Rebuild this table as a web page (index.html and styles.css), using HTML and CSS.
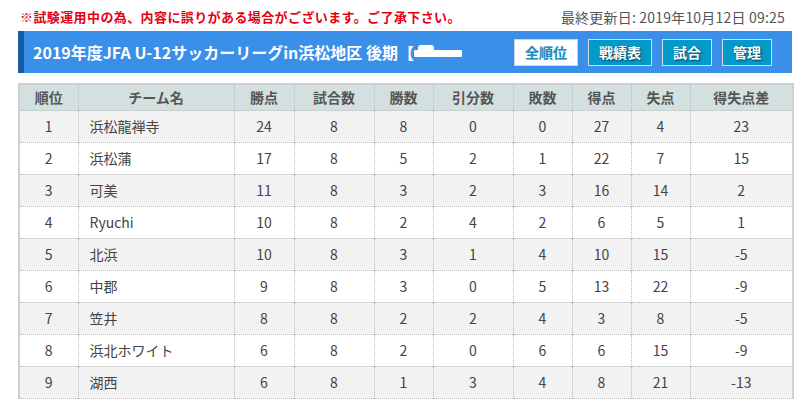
FILE: index.html
```html
<!DOCTYPE html>
<html lang="ja">
<head>
<meta charset="utf-8">
<title>順位表</title>
<link rel="stylesheet" href="styles.css">
</head>
<body>
<div class="page">
  <div class="topline">
    <p class="notice">※試験運用中の為、内容に誤りがある場合がございます。ご了承下さい。</p>
    <p class="updated">最終更新日: 2019年10月12日 09:25</p>
  </div>
  <div class="titlebar">
    <h1 class="title">2019年度JFA U-12サッカーリーグin浜松地区 後期【<span class="redact"><span class="redact-lump"></span></span></h1>
    <nav class="menu">
      <a class="btn btn-active">全順位</a>
      <a class="btn">戦績表</a>
      <a class="btn">試合</a>
      <a class="btn">管理</a>
    </nav>
  </div>
  <table class="standings">
    <colgroup>
      <col class="c-rank"><col class="c-team"><col class="c-pts"><col class="c-gp"><col class="c-w"><col class="c-d"><col class="c-l"><col class="c-gf"><col class="c-ga"><col class="c-gd">
    </colgroup>
    <thead>
      <tr><th>順位</th><th>チーム名</th><th>勝点</th><th>試合数</th><th>勝数</th><th>引分数</th><th>敗数</th><th>得点</th><th>失点</th><th>得失点差</th></tr>
    </thead>
    <tbody>
      <tr><td>1</td><td class="team">浜松龍禅寺</td><td>24</td><td>8</td><td>8</td><td>0</td><td>0</td><td>27</td><td>4</td><td>23</td></tr>
      <tr><td>2</td><td class="team">浜松蒲</td><td>17</td><td>8</td><td>5</td><td>2</td><td>1</td><td>22</td><td>7</td><td>15</td></tr>
      <tr><td>3</td><td class="team">可美</td><td>11</td><td>8</td><td>3</td><td>2</td><td>3</td><td>16</td><td>14</td><td>2</td></tr>
      <tr><td>4</td><td class="team">Ryuchi</td><td>10</td><td>8</td><td>2</td><td>4</td><td>2</td><td>6</td><td>5</td><td>1</td></tr>
      <tr><td>5</td><td class="team">北浜</td><td>10</td><td>8</td><td>3</td><td>1</td><td>4</td><td>10</td><td>15</td><td>-5</td></tr>
      <tr><td>6</td><td class="team">中郡</td><td>9</td><td>8</td><td>3</td><td>0</td><td>5</td><td>13</td><td>22</td><td>-9</td></tr>
      <tr><td>7</td><td class="team">笠井</td><td>8</td><td>8</td><td>2</td><td>2</td><td>4</td><td>3</td><td>8</td><td>-5</td></tr>
      <tr><td>8</td><td class="team">浜北ホワイト</td><td>6</td><td>8</td><td>2</td><td>0</td><td>6</td><td>6</td><td>15</td><td>-9</td></tr>
      <tr><td>9</td><td class="team">湖西</td><td>6</td><td>8</td><td>1</td><td>3</td><td>4</td><td>8</td><td>21</td><td>-13</td></tr>
    </tbody>
  </table>
</div>
</body>
</html>
```
FILE: styles.css
```css
* { box-sizing: border-box; }
html, body { margin: 0; padding: 0; background: #fff; }
body {
  font-family: "Noto Sans CJK JP", "Noto Sans", sans-serif;
  font-size: 14px;
  color: #444;
}
.page {
  padding: 0 10px 0 18px;
}
.topline {
  display: flex;
  justify-content: space-between;
  align-items: center;
  height: 31px;
  padding: 2px 7px 0 2px;
}
.notice {
  margin: 0;
  color: #e60012;
  font-weight: bold;
  font-size: 13px;
  letter-spacing: 0.4px;
}
.updated {
  margin: 0;
  color: #555;
  font-size: 14px;
  letter-spacing: 0.2px;
}
.titlebar {
  display: flex;
  align-items: center;
  justify-content: space-between;
  height: 42px;
  background: #3a8fe9;
  border-left: 6px solid #175ca4;
  padding: 0 20px 0 9px;
}
.title {
  margin: 0;
  color: #fff;
  font-size: 16px;
  font-weight: bold;
  white-space: nowrap;
  display: flex;
  align-items: center;
}
.redact {
  position: relative;
  display: inline-block;
  width: 48px;
  height: 7px;
  background: #fff;
  margin-left: 0;
  margin-top: 2px;
  border-radius: 1px;
}
.redact-lump {
  position: absolute;
  left: 4px;
  top: -5px;
  width: 16px;
  height: 10px;
  background: #fff;
  border-radius: 3px;
}
.menu {
  display: flex;
  gap: 10px;
}
.btn {
  display: flex;
  align-items: center;
  justify-content: center;
  height: 27px;
  padding: 0 10px;
  border: 1px solid #d6dde2;
  background: #0399c9;
  color: #fff;
  font-weight: bold;
  font-size: 14px;
  text-shadow: 1px 1px 2px rgba(0, 0, 0, 0.6);
  white-space: nowrap;
}
.btn-active {
  background: #fff;
  color: #1b8dc4;
  text-shadow: 0 0 1px rgba(0, 60, 100, 0.25);
  border-color: #cfd6da;
}
.standings {
  margin-top: 10px;
  width: 774px;
  border-collapse: collapse;
  table-layout: fixed;
  border-left: 2px solid #d0d0d0;
  border-right: 2px solid #d0d0d0;
  border-top: 2px solid #d0d0d0;
  border-bottom: 1px dotted #bbb;
}
.c-rank { width: 59px; }
.c-team { width: 156px; }
.c-pts { width: 60px; }
.c-gp { width: 80px; }
.c-w { width: 59px; }
.c-d { width: 80px; }
.c-l { width: 59px; }
.c-gf { width: 59px; }
.c-ga { width: 59px; }
.c-gd { width: 103px; }
.standings th {
  height: 26px;
  background: #d4e0df;
  color: #555;
  font-weight: bold;
  font-size: 14px;
  text-align: center;
  padding: 0;
  border-left: 1px dotted #bbb;
  border-bottom: 1px solid #c8cfcf;
}
.standings th:first-child { border-left: none; }
.standings td {
  height: 32px;
  text-align: center;
  padding: 0;
  border-left: 1px dotted #bbb;
  border-top: 1px dotted #bbb;
  color: #444;
  font-size: 14px;
}
.standings td:first-child { border-left: none; }
.standings tbody tr:nth-child(odd) td { background: #f2f2f2; }
.standings tbody tr:nth-child(even) td { background: #fff; }
.standings td.team {
  text-align: left;
  padding-left: 11px;
}
```
